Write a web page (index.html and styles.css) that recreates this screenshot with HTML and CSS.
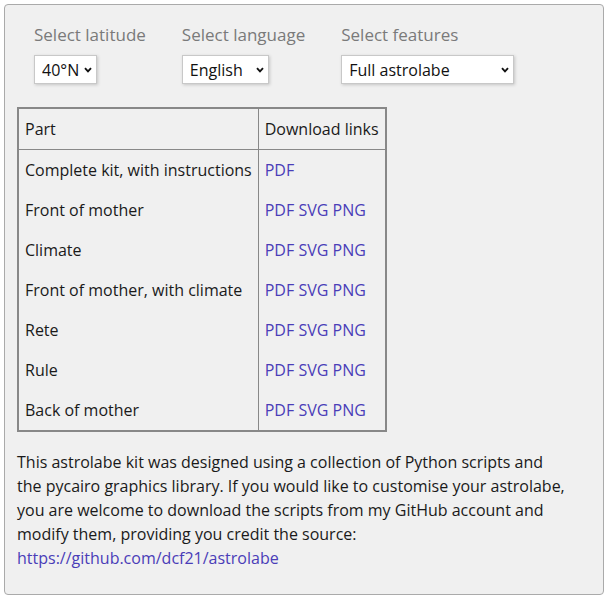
FILE: index.html
```html
<!DOCTYPE html>
<html lang="en">
<head>
<meta charset="utf-8">
<title>Astrolabe kit</title>
<link rel="stylesheet" href="styles.css">
</head>
<body>
<div class="panel">
  <form class="options">
    <div class="group">
      <label class="group-label" for="lat">Select latitude</label>
      <span class="select-wrap select-lat">
        <select id="lat" class="select">
          <option>40°N</option>
        </select>
        <svg class="chev" width="8" height="6" viewBox="0 0 8 6"><path d="M1 1.2 L4 4.3 L7 1.2" fill="none" stroke="#111" stroke-width="1.9"/></svg>
      </span>
    </div>
    <div class="group">
      <label class="group-label" for="lang">Select language</label>
      <span class="select-wrap select-lang">
        <select id="lang" class="select">
          <option>English</option>
        </select>
        <svg class="chev" width="8" height="6" viewBox="0 0 8 6"><path d="M1 1.2 L4 4.3 L7 1.2" fill="none" stroke="#111" stroke-width="1.9"/></svg>
      </span>
    </div>
    <div class="group">
      <label class="group-label" for="feat">Select features</label>
      <span class="select-wrap select-feat">
        <select id="feat" class="select">
          <option>Full astrolabe</option>
        </select>
        <svg class="chev" width="8" height="6" viewBox="0 0 8 6"><path d="M1 1.2 L4 4.3 L7 1.2" fill="none" stroke="#111" stroke-width="1.9"/></svg>
      </span>
    </div>
  </form>

  <table class="parts">
    <thead>
      <tr><th>Part</th><th>Download links</th></tr>
    </thead>
    <tbody>
      <tr><td>Complete kit, with instructions</td><td><a href="#">PDF</a></td></tr>
      <tr><td>Front of mother</td><td><a href="#">PDF</a> <a href="#">SVG</a> <a href="#">PNG</a></td></tr>
      <tr><td>Climate</td><td><a href="#">PDF</a> <a href="#">SVG</a> <a href="#">PNG</a></td></tr>
      <tr><td>Front of mother, with climate</td><td><a href="#">PDF</a> <a href="#">SVG</a> <a href="#">PNG</a></td></tr>
      <tr><td>Rete</td><td><a href="#">PDF</a> <a href="#">SVG</a> <a href="#">PNG</a></td></tr>
      <tr><td>Rule</td><td><a href="#">PDF</a> <a href="#">SVG</a> <a href="#">PNG</a></td></tr>
      <tr><td>Back of mother</td><td><a href="#">PDF</a> <a href="#">SVG</a> <a href="#">PNG</a></td></tr>
    </tbody>
  </table>

  <p class="note">This astrolabe kit was designed using a collection of Python scripts and the pycairo graphics library. If you would like to customise your astrolabe, you are welcome to download the scripts from my GitHub account and modify them, providing you credit the source: <a href="#">https://github.com/dcf21/astrolabe</a></p>
</div>
</body>
</html>
```

FILE: styles.css
```css
html, body {
  margin: 0;
  padding: 0;
  background: #ffffff;
}

body {
  font-family: "Open Sans", "Noto Sans", sans-serif;
  font-size: 16px;
  color: #1a1a1a;
}

.panel {
  margin: 4px 5px 4px 4px;
  padding: 18px 12px 24px 12px;
  background: #f0f0f0;
  border: 1px solid #aaaaaa;
  border-radius: 4px;
}

.options {
  display: flex;
  gap: 36px;
  padding-left: 17px;
  margin: 0;
}

.group {
  display: flex;
  flex-direction: column;
  align-items: flex-start;
}

.group-label {
  font-size: 17px;
  line-height: 23px;
  color: #7a7a7a;
  margin-bottom: 9px;
}

.select-wrap {
  position: relative;
  display: block;
}

.select {
  appearance: none;
  -webkit-appearance: none;
  display: block;
  height: 29px;
  margin: 0;
  padding: 0 7px;
  border: 1px solid #c8c8c8;
  border-radius: 0;
  background: #ffffff;
  box-shadow: 1px 1px 3px rgba(0, 0, 0, 0.18);
  font-family: "Open Sans", "Noto Sans", sans-serif;
  font-size: 16px;
  color: #111111;
}

.select-lat .select { width: 63px; }
.select-lang .select { width: 87px; }
.select-feat .select { width: 173px; }

.chev {
  position: absolute;
  right: 5px;
  top: 12px;
  pointer-events: none;
}

.parts {
  margin-top: 23px;
  border: 2px solid #888888;
  border-spacing: 0;
  border-collapse: separate;
}

.parts th,
.parts td {
  padding: 8px 6px;
  line-height: 24px;
  font-weight: normal;
  text-align: left;
  white-space: nowrap;
}

.parts th {
  border-bottom: 1px solid #888888;
}

.parts th:first-child,
.parts td:first-child {
  border-right: 1px solid #888888;
}

.parts a,
.note a {
  color: #4a3db8;
  text-decoration: none;
}

.note {
  margin: 18px 0 0 0;
  max-width: 550px;
  line-height: 24px;
}
```
